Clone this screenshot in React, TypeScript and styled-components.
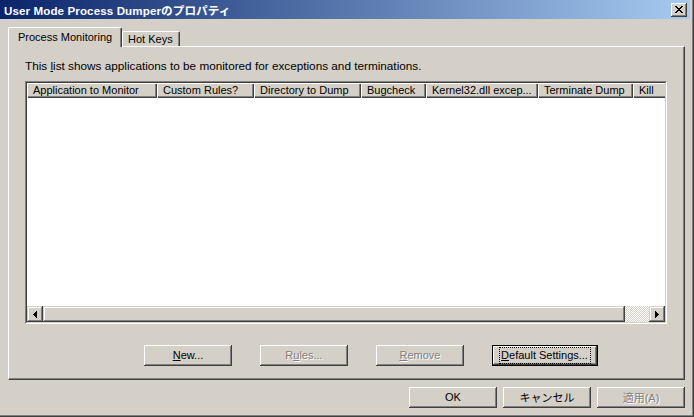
import React from "react";
import styled, { createGlobalStyle } from "styled-components";

const FACE = "#d4d0c8";
const SHADOW = "#808080";
const DARK = "#404040";
const LIGHT = "#ffffff";

const Global = createGlobalStyle`
  html, body { margin: 0; padding: 0; background: ${FACE}; }
  body {
    font-family: "Liberation Sans", "Noto Sans CJK JP", sans-serif;
    font-size: 11px;
    color: #000;
  }
`;

const Window = styled.div`
  width: 694px;
  height: 417px;
  box-sizing: border-box;
  background: ${FACE};
  display: flex;
  flex-direction: column;
  border-right: 1px solid ${DARK};
  border-bottom: 1px solid ${DARK};
  box-shadow: inset -1px -1px 0 ${SHADOW};
  padding: 0 2px 1px 0;
  overflow: hidden;
`;

const TitleBar = styled.div`
  height: 19px;
  flex: none;
  display: flex;
  align-items: center;
  padding: 0 3px 0 4px;
  margin-right: 1px;
  background: linear-gradient(to right, #0a246a, #a6caf0);
`;

const TitleText = styled.span`
  color: #fff;
  font-weight: bold;
  font-size: 11.6px;
  letter-spacing: 0.1px;
  white-space: nowrap;
`;

const bevelRaised = `
  box-shadow: inset -1px -1px 0 ${DARK}, inset 1px 1px 0 ${LIGHT},
    inset -2px -2px 0 ${SHADOW}, inset 2px 2px 0 ${FACE};
`;

const CloseButton = styled.div`
  margin-left: auto;
  width: 16px;
  height: 14px;
  background: ${FACE};
  ${bevelRaised}
  display: flex;
  align-items: center;
  justify-content: center;
  padding-bottom: 1px;
  box-sizing: border-box;
`;

const Content = styled.div`
  flex: 1;
  display: flex;
  flex-direction: column;
  padding: 8px 6px 0 8px;
`;

const TabStrip = styled.div`
  height: 19px;
  display: flex;
  align-items: flex-end;
  flex: none;
`;

const Tab = styled.div<{ $active?: boolean }>`
  position: relative;
  z-index: 1;
  box-sizing: border-box;
  height: ${(p) => (p.$active ? 20 : 15)}px;
  margin-bottom: ${(p) => (p.$active ? -1 : 0)}px;
  width: ${(p) => (p.$active ? 114 : 58)}px;
  padding-left: ${(p) => (p.$active ? 9 : 5)}px;
  padding-top: ${(p) => (p.$active ? 2 : 0)}px;
  background: ${FACE};
  border-top: 1px solid ${LIGHT};
  border-left: 1px solid ${LIGHT};
  border-right: 1px solid ${DARK};
  box-shadow: inset -1px 0 0 ${SHADOW};
  border-radius: 2px 2px 0 0;
  line-height: 14px;
  white-space: nowrap;
`;

const Panel = styled.div`
  height: 334px;
  flex: none;
  box-sizing: border-box;
  border-top: 1px solid ${LIGHT};
  border-left: 1px solid ${LIGHT};
  border-right: 1px solid ${DARK};
  border-bottom: 1px solid ${DARK};
  box-shadow: inset -1px -1px 0 ${SHADOW};
  padding: 12px 0 0 16px;
  display: flex;
  flex-direction: column;
`;

const Desc = styled.div`
  font-size: 11.75px;
  line-height: 13px;
  white-space: nowrap;
`;

const ListOuter = styled.div`
  margin-top: 9px;
  width: 642px;
  height: 243px;
  box-sizing: border-box;
  border: 1px solid;
  border-color: ${SHADOW} ${LIGHT} ${LIGHT} ${SHADOW};
`;

const ListInner = styled.div`
  height: 100%;
  box-sizing: border-box;
  border: 1px solid;
  border-color: ${DARK} ${FACE} ${FACE} ${DARK};
  background: #fff;
  display: flex;
  flex-direction: column;
  overflow: hidden;
`;

const HeaderRow = styled.div`
  display: flex;
  height: 15px;
  flex: none;
  overflow: hidden;
`;

const HeaderCell = styled.div<{ $w: number }>`
  flex: none;
  width: ${(p) => p.$w}px;
  box-sizing: border-box;
  background: ${FACE};
  box-shadow: inset 1px 1px 0 ${LIGHT}, inset -1px -1px 0 ${DARK},
    inset -2px -2px 0 ${SHADOW};
  padding-left: 6px;
  line-height: 14px;
  white-space: nowrap;
  overflow: hidden;
`;

const ListBody = styled.div`
  flex: 1;
  background: #fff;
`;

const ScrollBar = styled.div`
  height: 16px;
  flex: none;
  display: flex;
`;

const ScrollButton = styled.div`
  width: 16px;
  height: 16px;
  flex: none;
  box-sizing: border-box;
  background: ${FACE};
  box-shadow: inset -1px -1px 0 ${DARK}, inset 1px 1px 0 ${FACE},
    inset -2px -2px 0 ${SHADOW}, inset 2px 2px 0 ${LIGHT};
  display: flex;
  align-items: center;
  justify-content: center;
`;

const Thumb = styled.div<{ $w: number }>`
  width: ${(p) => p.$w}px;
  flex: none;
  background: ${FACE};
  box-shadow: inset -1px -1px 0 ${DARK}, inset 1px 1px 0 ${FACE},
    inset -2px -2px 0 ${SHADOW}, inset 2px 2px 0 ${LIGHT};
`;

const Track = styled.div`
  flex: 1;
  background: repeating-conic-gradient(${LIGHT} 0 25%, ${FACE} 0 50%) 0 0 / 2px 2px;
`;

const ButtonRow = styled.div`
  display: flex;
  gap: 28px;
  margin-top: 21px;
  padding-left: 119px;
`;

const Button = styled.div<{ $w?: number; $disabled?: boolean; $default?: boolean }>`
  width: ${(p) => p.$w ?? 88}px;
  height: 21px;
  box-sizing: border-box;
  background: ${FACE};
  display: flex;
  align-items: center;
  justify-content: center;
  white-space: nowrap;
  color: ${(p) => (p.$disabled ? SHADOW : "#000")};
  text-shadow: ${(p) => (p.$disabled ? `1px 1px 0 ${LIGHT}` : "none")};
  border: ${(p) => (p.$default ? "1px solid #000" : "none")};
  box-shadow: inset -1px -1px 0 ${DARK}, inset 1px 1px 0 ${LIGHT},
    inset -2px -2px 0 ${SHADOW}, inset 2px 2px 0 ${FACE};
  padding-bottom: 1px;
`;

const Focus = styled.span`
  outline: 1px dotted #000;
  outline-offset: 0;
  padding: 1px 2px 1px 1px;
  line-height: 13px;
`;

const BottomRow = styled.div`
  display: flex;
  justify-content: flex-end;
  gap: 6px;
  margin-top: 7px;
`;

const CloseIcon = () => (
  <svg width="8" height="7" viewBox="0 0 8 7" shapeRendering="crispEdges">
    <path
      d="M0 0h2v1h-2zM6 0h2v1h-2zM1 1h2v1h-2zM5 1h2v1h-2zM2 2h4v1h-4zM3 3h2v1h-2zM2 4h4v1h-4zM1 5h2v1h-2zM5 5h2v1h-2zM0 6h2v1h-2zM6 6h2v1h-2z"
      fill="#000"
    />
  </svg>
);

const Arrow = ({ dir }: { dir: "left" | "right" }) => (
  <svg width="4" height="7" viewBox="0 0 4 7" shapeRendering="crispEdges">
    {dir === "left" ? (
      <path d="M3 0h1v7h-1zM2 1h1v5h-1zM1 2h1v3h-1zM0 3h1v1h-1z" fill="#000" />
    ) : (
      <path d="M0 0h1v7h-1zM1 1h1v5h-1zM2 2h1v3h-1zM3 3h1v1h-1z" fill="#000" />
    )}
  </svg>
);

const columns: [string, number][] = [
  ["Application to Monitor", 130],
  ["Custom Rules?", 97],
  ["Directory to Dump", 107],
  ["Bugcheck", 65],
  ["Kernel32.dll excep...", 112],
  ["Terminate Dump", 95],
  ["Kill", 60],
];

export default function App() {
  return (
    <>
      <Global />
      <Window>
        <TitleBar>
          <TitleText>User Mode Process Dumperのプロパティ</TitleText>
          <CloseButton>
            <CloseIcon />
          </CloseButton>
        </TitleBar>
        <Content>
          <TabStrip>
            <Tab $active>Process Monitoring</Tab>
            <Tab>Hot Keys</Tab>
          </TabStrip>
          <Panel>
            <Desc>
              This <u>l</u>ist shows applications to be monitored for exceptions and terminations.
            </Desc>
            <ListOuter>
              <ListInner>
                <HeaderRow>
                  {columns.map(([name, w]) => (
                    <HeaderCell key={name} $w={w}>
                      {name}
                    </HeaderCell>
                  ))}
                </HeaderRow>
                <ListBody />
                <ScrollBar>
                  <ScrollButton>
                    <Arrow dir="left" />
                  </ScrollButton>
                  <Thumb $w={582} />
                  <Track />
                  <ScrollButton>
                    <Arrow dir="right" />
                  </ScrollButton>
                </ScrollBar>
              </ListInner>
            </ListOuter>
            <ButtonRow>
              <Button>
                <span>
                  <u>N</u>ew...
                </span>
              </Button>
              <Button $disabled>
                <span>
                  R<u>u</u>les...
                </span>
              </Button>
              <Button $disabled>
                <span>
                  <u>R</u>emove
                </span>
              </Button>
              <Button $w={106} $default>
                <Focus>
                  <u>D</u>efault Settings...
                </Focus>
              </Button>
            </ButtonRow>
          </Panel>
          <BottomRow>
            <Button>OK</Button>
            <Button>キャンセル</Button>
            <Button $disabled>適用(A)</Button>
          </BottomRow>
        </Content>
      </Window>
    </>
  );
}
